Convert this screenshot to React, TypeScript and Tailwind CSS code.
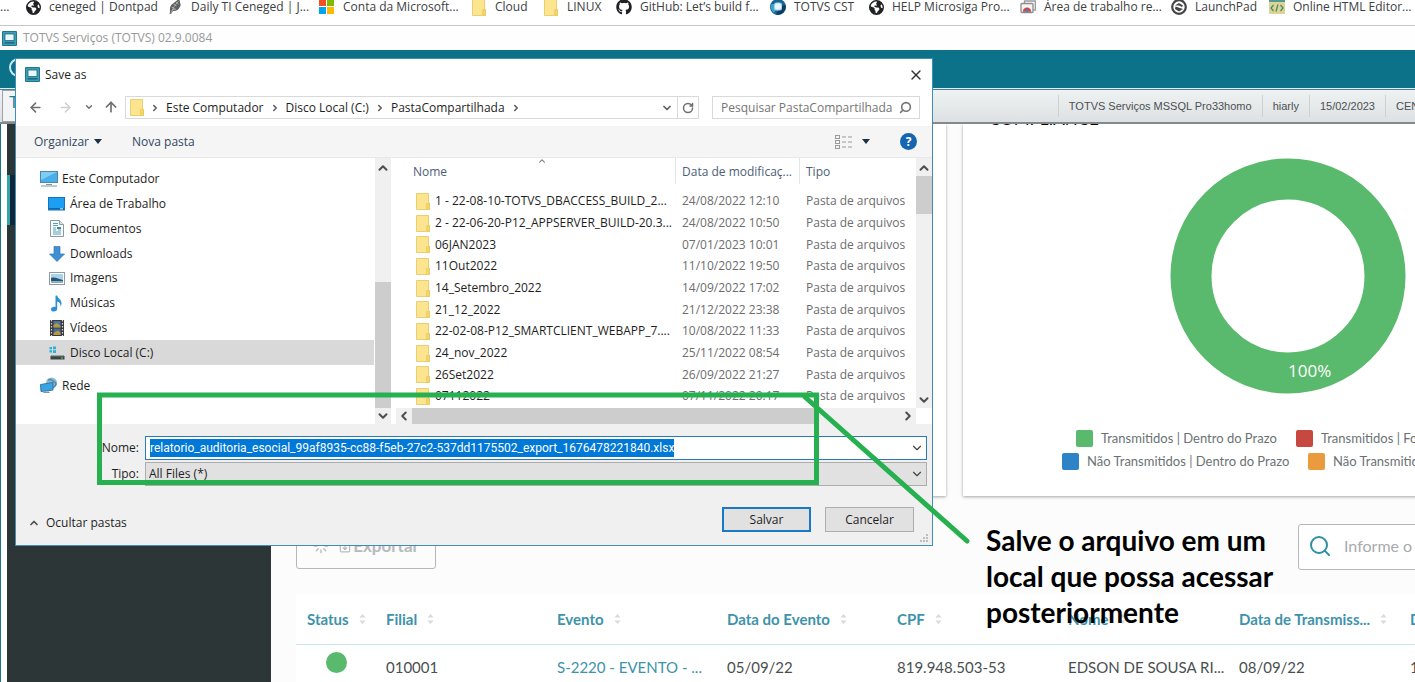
import React from "react";
import {
  ArrowLeft,
  ArrowRight,
  ArrowUp,
  ChevronDown,
  ChevronLeft,
  ChevronRight,
  ChevronUp,
  FileDown,
  Loader,
  RotateCw,
  Search,
  X,
} from "lucide-react";
import { FaGithub, FaEarthAmericas } from "react-icons/fa6";

/* ---------- icons ---------- */

function FolderIcon({ className = "" }: { className?: string }) {
  return (
    <svg viewBox="0 0 14 17" className={`h-[17px] w-[14px] shrink-0 ${className}`} aria-hidden="true">
      <path d="M0.5 0.5h12v10h1v6H0.5z" fill="#fde48f" stroke="#e9cf74" />
      <path d="M10.5 10.5h3v6h-3z" fill="#f6d568" stroke="#e6c75f" strokeWidth="0.6" />
    </svg>
  );
}

function TerminalIcon() {
  return (
    <svg viewBox="0 0 15 15" className="h-[15px] w-[15px] shrink-0" aria-hidden="true">
      <rect width="15" height="15" rx="1" fill="#1c7791" />
      <rect x="1" y="1" width="13" height="13" fill="#3f9cb3" />
      <rect x="3" y="3" width="9" height="6.5" fill="#eaf7fa" stroke="#1c6c84" strokeWidth="0.8" />
      <rect x="2.5" y="11" width="10" height="1.6" fill="#1b6a82" />
    </svg>
  );
}

function FeatherIcon() {
  return (
    <svg viewBox="0 0 16 16" className="h-4 w-4" aria-hidden="true">
      <path d="M2.500 14.500c.8-1.500.5-3 .5-5C3 5 8 4 11.500 0c1 .8 1.700 2.300 1.500 4 1 1 .8 3-.5 4.500C11.500 11 9 12.500 6 12l-2 3z" fill="#5f5f5f" />
      <path d="M4 14C6 9 8 6 11.500 2.500M4.500 8l3 1.500M6.500 5l3 2M9 3l2.500 2M5 11l4-1" stroke="#c9c9c9" strokeWidth="0.700" fill="none" />
    </svg>
  );
}

function MicrosoftIcon() {
  return (
    <svg viewBox="0 0 16 16" className="h-4 w-4" aria-hidden="true">
      <path d="M0 0h7v7H0z" fill="#f25022" />
      <path d="M8 0h7v7H8z" fill="#7fba00" />
      <path d="M0 8h7v7H0z" fill="#00a4ef" />
      <path d="M8 8h7v7H8z" fill="#ffb900" />
    </svg>
  );
}

function OrbIcon() {
  return (
    <svg viewBox="0 0 16 16" className="h-4 w-4" aria-hidden="true">
      <circle cx="8" cy="8" r="8" fill="#17648f" />
      <path d="M1.500 5A7.500 7.500 0 0 0 4 14l2-3-2-6z" fill="#3fa3cc" />
      <path d="M6 15.500A8 8 0 0 0 15.500 6L12 7l-4 5z" fill="#0d3b66" />
      <rect x="4" y="3.500" width="8" height="8" rx="2.500" fill="#a9d6ea" />
      <rect x="5" y="4.500" width="6" height="6" rx="2" fill="#e8f6fb" />
    </svg>
  );
}

function RemoteIcon() {
  return (
    <svg viewBox="0 0 16 16" className="h-4 w-4" aria-hidden="true">
      <path d="M4.500 4V2h10.800v9h-2" fill="#fff" stroke="#9a9a9a" strokeWidth="1.300" />
      <rect x="1" y="4.500" width="12" height="9" rx="1" fill="#f4f4f4" stroke="#8c8c8c" strokeWidth="1.300" />
      <path d="M2.800 12.800a4.200 4.200 0 0 1 8.400 0z" fill="#d9442f" />
      <circle cx="7" cy="11.600" r="1.600" fill="#3f7fe0" />
    </svg>
  );
}

function LaunchIcon() {
  return (
    <svg viewBox="0 0 16 16" className="h-4 w-4" aria-hidden="true">
      <circle cx="8" cy="8" r="6.800" fill="#fff" stroke="#444" strokeWidth="2.200" />
      <path d="M4 6.500 8 4l4 2.500L11 8 8 6.500zM4.500 7.500 12 10l-4 2.500-4-2.500z" fill="#444" />
    </svg>
  );
}

function CodeIcon() {
  return (
    <svg viewBox="0 0 16 16" className="h-4 w-4" aria-hidden="true">
      <rect width="16" height="15" fill="#dcd39a" />
      <rect width="16" height="3" fill="#559a8e" />
      <path d="M4.500 6 2 9l2.500 3M11.500 6 14 9l-2.500 3M9 5.500l-2 7" stroke="#4c8f56" strokeWidth="1.300" fill="none" />
    </svg>
  );
}

function ComputerIcon() {
  return (
    <svg viewBox="0 0 18 16" className="h-4 w-[18px] shrink-0" aria-hidden="true">
      <rect x="0.500" y="0.500" width="17" height="11" fill="#4aaee8" stroke="#4f87a8" />
      <path d="M1 1h16L1 9z" fill="#7fccf5" />
      <path d="M6 13h6v1H6zM1 14.500h16v1H1z" fill="#7f97a5" />
    </svg>
  );
}

function DesktopIcon() {
  return (
    <svg viewBox="0 0 17 14" className="h-3.5 w-[17px]" aria-hidden="true">
      <rect x="0.500" y="0.500" width="16" height="12.500" fill="#1c9ff2" stroke="#1474bb" />
      <path d="M1 11h15v1.500H1z" fill="#0d67ad" />
      <path d="M12 11.300h3v1h-3z" fill="#d3ecff" />
    </svg>
  );
}

function DocumentIcon() {
  return (
    <svg viewBox="0 0 14 17" className="h-[17px] w-3.5" aria-hidden="true">
      <path d="M0.500 0.500h9l4 4v12H0.500z" fill="#f8fafb" stroke="#8e999e" />
      <path d="M9.500 0.500v4h4" fill="#dfe5e8" stroke="#8e999e" />
      <path d="M3 3.500h5M3 5.500h5M3 8h3M3 10h3M3 12h8M3 14h8M8 10h3" stroke="#4fa3b8" strokeWidth="1" />
      <path d="M7 7h4v2H7z" fill="#3c8a9c" />
    </svg>
  );
}

function DownloadIcon() {
  return (
    <svg viewBox="0 0 16 16" className="h-4 w-4" aria-hidden="true">
      <path d="M5 0.500h6V8h4.500L8 15.500.500 8H5z" fill="#3f8fd2" stroke="#2f78b6" strokeWidth="0.700" />
    </svg>
  );
}

function PictureIcon() {
  return (
    <svg viewBox="0 0 16 13" className="h-[13px] w-4" aria-hidden="true">
      <rect x="0.500" y="0.500" width="15" height="12" fill="#fff" stroke="#8f9ba3" />
      <rect x="2" y="2" width="12" height="9" fill="#a8d3ec" />
      <path d="M2 6c4-1.500 7 1 12 2v1.500H2z" fill="#31536b" />
      <path d="M2 9h12v2H2z" fill="#7fb4cc" />
    </svg>
  );
}

function MusicIcon() {
  return (
    <svg viewBox="0 0 13 17" className="h-[17px] w-[13px]" aria-hidden="true">
      <path d="M5.500 0.500h1.700c.3 3 4.800 4 4.300 8.500-.2 1.300-.8 2-1.300 2.500.8-3-1-4.500-3-5v7.200c0 1.700-1.500 2.800-3.300 2.800S1 15.600 1 14.200s1.300-2.500 3-2.500c.6 0 1 .1 1.500.3z" fill="#2b8fd6" />
    </svg>
  );
}

function VideoIcon() {
  return (
    <svg viewBox="0 0 14 16" className="h-4 w-3.5" aria-hidden="true">
      <rect width="14" height="16" fill="#38383c" />
      <path d="M1.500 0v16M12.500 0v16" stroke="#d5d5d5" strokeWidth="1.200" strokeDasharray="1.500 1.500" />
      <rect x="3.500" y="1" width="7" height="6.500" fill="#4f74a8" />
      <rect x="3.500" y="8.500" width="7" height="6.500" fill="#3f6da5" />
      <path d="M3.500 5 7 3l3.500 3v1.500h-7zM3.500 13 8 10.500l2.500 2V15h-7z" fill="#b79a3a" />
    </svg>
  );
}

function DriveIcon() {
  return (
    <svg viewBox="0 0 16 14" className="h-3.5 w-4" aria-hidden="true">
      <path d="M0.500 1h2.500v2.300H.500zM4 .500h3v2.800H4zM.500 4.200h2.500v2.300H.500zM4 4.200h3V7H4z" fill="#26b3d6" />
      <path d="M3 9h11l1.500 1.500v3h-14v-3z" fill="#3d4444" />
      <path d="M3 9h11l1 1.300H2z" fill="#9aa3a3" />
      <path d="M12 11.500h2v1h-2z" fill="#5fe05f" />
    </svg>
  );
}

function NetworkIcon() {
  return (
    <svg viewBox="0 0 18 17" className="h-[17px] w-[18px] shrink-0" aria-hidden="true">
      <circle cx="11.500" cy="6" r="5.500" fill="#8cb9d0" />
      <path d="M8 3c2-1 4 0 5 1s3 1 3 3-2 3-4 4" stroke="#4f8aa8" strokeWidth="1.400" fill="none" />
      <path d="M0.500 7.500 13 5.500v7.500L1 14.500z" fill="#3aa5e6" stroke="#3676a0" />
      <path d="M3 16h7l-1-1.500H4z" fill="#7f97a5" />
    </svg>
  );
}

function ViewModeIcon() {
  return (
    <svg viewBox="0 0 18 14" className="h-3.5 w-[18px]" aria-hidden="true">
      {[0, 5, 10].map((y) => (
        <g key={y} stroke="#9a9a9a" fill="none">
          <rect x="0.500" y={y + 0.500} width="4" height="3" />
          <path d={`M7 ${y + 2}h4M13 ${y + 2}h4`} strokeWidth="1.200" />
        </g>
      ))}
    </svg>
  );
}

function SortArrows() {
  return (
    <svg viewBox="0 0 7 10" className="ml-2.5 inline-block h-2.5 w-[7px] align-[1px]" aria-hidden="true">
      <path d="M3.500 0 6.500 3.500h-6zM3.500 10 .500 6.500h6z" fill="#d6dadb" />
    </svg>
  );
}

function Caret() {
  return (
    <svg viewBox="0 0 8 5" className="h-[5px] w-2" aria-hidden="true">
      <path d="M0 0h8L4 5z" fill="#1d3145" />
    </svg>
  );
}

/* ---------- data ---------- */

const bookmarks: { label: string; icon: React.ReactNode }[] = [
  { label: "ceneged | Dontpad", icon: <FaEarthAmericas className="h-[15px] w-[15px] text-[#202124]" /> },
  { label: "Daily TI Ceneged | J...", icon: <FeatherIcon /> },
  { label: "Conta da Microsoft...", icon: <MicrosoftIcon /> },
  { label: "Cloud", icon: <FolderIcon /> },
  { label: "LINUX", icon: <FolderIcon /> },
  { label: "GitHub: Let’s build f...", icon: <FaGithub className="h-4 w-4 text-[#202124]" /> },
  { label: "TOTVS CST", icon: <OrbIcon /> },
  { label: "HELP Microsiga Pro...", icon: <FaEarthAmericas className="h-[15px] w-[15px] text-[#202124]" /> },
  { label: "Área de trabalho re...", icon: <RemoteIcon /> },
  { label: "LaunchPad", icon: <LaunchIcon /> },
  { label: "Online HTML Editor...", icon: <CodeIcon /> },
];

const places = [
  { label: "Área de Trabalho", icon: <DesktopIcon /> },
  { label: "Documentos", icon: <DocumentIcon /> },
  { label: "Downloads", icon: <DownloadIcon /> },
  { label: "Imagens", icon: <PictureIcon /> },
  { label: "Músicas", icon: <MusicIcon /> },
  { label: "Vídeos", icon: <VideoIcon /> },
  { label: "Disco Local (C:)", icon: <DriveIcon />, selected: true },
];

const folders = [
  ["1 - 22-08-10-TOTVS_DBACCESS_BUILD_2...", "24/08/2022 12:10"],
  ["2 - 22-06-20-P12_APPSERVER_BUILD-20.3...", "24/08/2022 10:50"],
  ["06JAN2023", "07/01/2023 10:01"],
  ["11Out2022", "11/10/2022 19:50"],
  ["14_Setembro_2022", "14/09/2022 17:02"],
  ["21_12_2022", "21/12/2022 23:38"],
  ["22-02-08-P12_SMARTCLIENT_WEBAPP_7....", "10/08/2022 11:33"],
  ["24_nov_2022", "25/11/2022 08:54"],
  ["26Set2022", "26/09/2022 21:27"],
  ["07112022", "07/11/2022 20:17"],
];

const columns = ["Status", "Filial", "Evento", "Data do Evento", "CPF", "Nome", "Data de Transmiss...", "Data"];

/* ---------- browser and application chrome ---------- */

function BookmarksBar() {
  return (
    <nav
      aria-label="Favoritos"
      className="grid h-[26px] shrink-0 grid-cols-[25px_142px_152px_152px_72px_73px_154px_98px_152px_151px_98px_1fr] border-b border-[#c4c7c9] bg-white font-['Open_Sans',sans-serif] text-xs leading-[14px] text-[#3c4043]"
    >
      <span>...</span>
      {bookmarks.map((b) => (
        <a key={b.label} href="#" className="flex h-3.5 items-center gap-2 whitespace-nowrap">
          <span className="flex w-4 shrink-0 justify-center">{b.icon}</span>
          {b.label}
        </a>
      ))}
    </nav>
  );
}

function StatusBar() {
  return (
    <div className="flex h-[35px] shrink-0 items-center border-y border-b-2 border-t-[#4e7f8a] border-b-[#84898b] bg-linear-to-b from-[#eef2f3] to-[#dde1e3] font-['Liberation_Sans',sans-serif] text-[11px] text-[#4c5052]">
      <div className="ml-0.5 h-full w-4 border border-[#9ba3a6] bg-[#f2f4f6] pl-1.5 text-base text-[#1f7d95]">T</div>
      <div className="ml-auto flex h-[22px] items-center [&>span]:border-l [&>span]:border-[#ccd1d3] [&>span]:px-[10px] [&>span]:leading-[22px]">
        <span>TOTVS Serviços MSSQL Pro33homo</span>
        <span>hiarly</span>
        <span>15/02/2023</span>
        <span className="w-[30px] overflow-hidden">CENEGED</span>
      </div>
    </div>
  );
}

function Legend({ color, label }: { color: string; label: string }) {
  return (
    <li className="flex items-center gap-2 whitespace-nowrap">
      <span className={`h-[17px] w-[17px] rounded-[2px] ${color}`} />
      {label}
    </li>
  );
}

function Dashboard() {
  return (
    <main className="min-w-0 flex-1 overflow-hidden bg-[#fcfcfc] pl-[25px] font-['Lato','Open_Sans',sans-serif]">
      <div className="min-w-[1317px]">
        <div className="grid grid-cols-2 gap-[17px]">
          <section className="h-[372px] bg-white shadow-[0_1px_3px_rgba(0,0,0,0.35)]" />
          <section className="h-[372px] overflow-hidden bg-white shadow-[0_1px_3px_rgba(0,0,0,0.35)]">
            <h2 className="-mt-[15px] pl-[26px] text-[17px] leading-5 text-black">COMPLIANCE</h2>
            <svg viewBox="0 0 236 236" className="mx-auto mt-[29px] block h-[236px] w-[236px]" role="img" aria-label="100%">
              <circle cx="118" cy="118" r="97" fill="none" stroke="#59b96c" strokeWidth="41" />
              <text x="118" y="219" fill="#fff" className="font-['Open_Sans',sans-serif] text-[17px]">
                100%
              </text>
            </svg>
            <ul className="mt-[33px] grid grid-cols-[220px_1fr] pl-[113px] text-[13px] leading-[23px] text-[#6b7274]">
              <Legend color="bg-[#59b96c]" label="Transmitidos | Dentro do Prazo" />
              <Legend color="bg-[#c64840]" label="Transmitidos | Fora do Prazo" />
            </ul>
            <ul className="grid grid-cols-[246px_1fr] pl-[99px] text-[13px] leading-[23px] text-[#6b7274]">
              <Legend color="bg-[#2d83c5]" label="Não Transmitidos | Dentro do Prazo" />
              <Legend color="bg-[#ea9b3e]" label="Não Transmitidos | Fora do Prazo" />
            </ul>
          </section>
        </div>

        <div className="mt-7 flex items-start justify-between">
          <button type="button" className="flex h-[45px] w-[140px] items-center justify-center gap-px rounded-[3px] border border-[#b4b8b9] pb-0.5 text-[17px] font-bold text-[#b5babb]">
            <Loader className="mr-2 h-4 w-4" />
            <FileDown className="h-4 w-3.5" />
            Exportar
          </button>
          <label className="flex h-[46px] w-[315px] items-center gap-3 rounded-[3px] border border-[#b4b8b9] bg-white pb-0.5 pl-[9px]">
            <Search className="h-6 w-6 shrink-0 text-[#2f8fa5]" strokeWidth={2} />
            <input type="search" aria-label="Pesquisar" placeholder="Informe o nome" className="w-full text-base outline-none placeholder:text-[#a7abad]" />
          </label>
        </div>

        <table className="mt-6 w-full table-fixed bg-white text-left text-[15px] text-[#4a4f51]">
          <colgroup>
            <col className="w-[79px]" />
            <col className="w-[171px]" />
            <col className="w-[170px]" />
            <col className="w-[170px]" />
            <col className="w-[171px]" />
            <col className="w-[171px]" />
            <col className="w-[171px]" />
            <col />
          </colgroup>
          <thead>
            <tr className="h-[50px] border-b border-[#c9e6ec] text-[#3d93aa]">
              {columns.map((c) => (
                <th key={c} className="whitespace-nowrap pl-[11px] font-bold">
                  {c}
                  <SortArrows />
                </th>
              ))}
            </tr>
          </thead>
          <tbody>
            <tr className="h-[45px]">
              <td className="pl-[30px]">
                <span role="img" aria-label="Transmitido" className="mb-2 block h-[21px] w-[21px] rounded-full bg-[#59b96c]" />
              </td>
              <td className="pl-[11px]">010001</td>
              <td className="pl-[11px]">
                <a href="#" className="text-[#3d93aa]">
                  S-2220 - EVENTO - ...
                </a>
              </td>
              <td className="pl-[11px]">05/09/22</td>
              <td className="pl-[11px]">819.948.503-53</td>
              <td className="pl-[11px]">EDSON DE SOUSA RI...</td>
              <td className="pl-[11px]">08/09/22</td>
              <td className="pl-[11px]">15/09/22</td>
            </tr>
          </tbody>
        </table>
      </div>
    </main>
  );
}

/* ---------- save dialog ---------- */

function ScrollArrow({ dir }: { dir: "up" | "down" | "left" | "right" }) {
  const Icon = { up: ChevronUp, down: ChevronDown, left: ChevronLeft, right: ChevronRight }[dir];
  return (
    <button type="button" aria-label={dir} className="flex h-4 w-4 shrink-0 items-center justify-center text-[#505050]">
      <Icon className="h-3.5 w-3.5" strokeWidth={3.5} />
    </button>
  );
}

function AddressRow() {
  const crumbs = ["Este Computador", "Disco Local (C:)", "PastaCompartilhada"];
  return (
    <div className="flex h-9 items-start pl-3 pr-3 pt-1.5">
      <div className="flex h-[22px] w-[97px] items-center text-[#6f6f6f]">
        <button type="button" aria-label="Voltar" className="w-[30px]">
          <ArrowLeft className="h-[15px] w-[15px]" strokeWidth={2.5} />
        </button>
        <button type="button" aria-label="Avançar" className="w-6 text-[#d0d0d0]">
          <ArrowRight className="h-[15px] w-[15px]" strokeWidth={2.5} />
        </button>
        <button type="button" aria-label="Recentes" className="w-[21px] pl-0.5">
          <ChevronDown className="h-2.5 w-2.5" strokeWidth={3.5} />
        </button>
        <button type="button" aria-label="Acima">
          <ArrowUp className="h-4 w-4" strokeWidth={2.5} />
        </button>
      </div>
      <div className="flex h-[23px] flex-1 items-center border border-[#d9d9d9] bg-white pl-1">
        <FolderIcon />
        <ChevronRight className="mx-1.5 h-2.5 w-2.5 text-[#555]" strokeWidth={3.5} />
        {crumbs.map((c) => (
          <React.Fragment key={c}>
            <a href="#" className="whitespace-nowrap">
              {c}
            </a>
            <ChevronRight className="mx-1.5 h-2.5 w-2.5 text-[#555]" strokeWidth={3.5} />
          </React.Fragment>
        ))}
        <ChevronDown className="ml-auto mr-1 h-3 w-3 text-[#606060]" strokeWidth={3.5} />
        <button type="button" aria-label="Atualizar" className="flex h-full w-[21px] items-center justify-center border-l border-[#d9d9d9] text-[#707070]">
          <RotateCw className="h-3 w-3" strokeWidth={3} />
        </button>
      </div>
      <label className="ml-[13px] flex h-[23px] w-[208px] items-center border border-[#d9d9d9] bg-white pl-2 pr-[7px]">
        <input aria-label="Pesquisar" placeholder="Pesquisar PastaCompartilhada" className="min-w-0 flex-1 outline-none placeholder:text-[#757575]" />
        <Search className="h-[13px] w-[13px] shrink-0 -scale-x-100 text-[#757575]" strokeWidth={3} />
      </label>
    </div>
  );
}

function PlacesTree() {
  return (
    <div className="flex w-[375px] shrink-0">
      <div className="flex-1 pr-px pt-[9px]">
        <ul className="flex h-[198px] flex-col [&>li]:flex [&>li]:flex-1 [&>li]:items-center">
          <li className="gap-1 pl-6">
            <ComputerIcon />
            Este Computador
          </li>
          {places.map((p) => (
            <li key={p.label} className={p.selected ? "gap-[5px] bg-[#d9d9d9] pl-8" : "gap-[5px] pl-8"}>
              <span className="flex w-[17px] justify-center">{p.icon}</span>
              {p.label}
            </li>
          ))}
        </ul>
        <p className="mt-2 flex h-[25px] items-center gap-1 pl-6">
          <NetworkIcon />
          Rede
        </p>
      </div>
      <div className="flex w-4 flex-col bg-[#f0f0f0] pt-0.5">
        <ScrollArrow dir="up" />
        <div className="mt-auto h-[126px] bg-[#cdcdcd]" />
        <ScrollArrow dir="down" />
      </div>
    </div>
  );
}

function FileList() {
  return (
    <div className="grid min-w-0 flex-1 grid-cols-[1fr_16px] grid-rows-[250px_16px] pl-[5px]">
      <div className="relative overflow-hidden">
        <ChevronUp className="absolute left-[141px] top-[-2px] h-2.5 w-2.5 text-[#666]" strokeWidth={2.5} />
        <table className="w-full table-fixed text-left">
          <colgroup>
            <col className="w-[280px]" />
            <col className="w-[124px]" />
            <col />
          </colgroup>
          <thead>
            <tr className="h-8 align-top text-[#4c607a] [&>th]:p-0 [&>th]:font-normal">
              <th>
                <div className="h-[26px] border-r border-[#e5e5e5] pl-[17px] leading-7">Nome</div>
              </th>
              <th>
                <div className="h-[26px] whitespace-nowrap border-r border-[#e5e5e5] pl-[6px] leading-7">Data de modificaç...</div>
              </th>
              <th>
                <div className="h-[26px] pl-[6px] leading-7">Tipo</div>
              </th>
            </tr>
          </thead>
          <tbody className="[&_td]:whitespace-nowrap [&_td]:p-0">
            {folders.map(([name, date]) => (
              <tr key={name} className="h-[22px] leading-5 nth-[3n]:h-[21px]">
                <td>
                  <div className="flex items-center gap-[5px] pl-5">
                    <FolderIcon />
                    {name}
                  </div>
                </td>
                <td className="text-[#6d6d6d]">
                  <span className="pl-[6px]">{date}</span>
                </td>
                <td className="text-[#6d6d6d]">
                  <span className="pl-[6px]">Pasta de arquivos</span>
                </td>
              </tr>
            ))}
          </tbody>
        </table>
      </div>
      <div className="flex flex-col bg-[#f0f0f0] pt-0.5">
        <ScrollArrow dir="up" />
        <div className="h-[38px] bg-[#cdcdcd]" />
        <div className="mt-auto">
          <ScrollArrow dir="down" />
        </div>
      </div>
      <div className="flex justify-between bg-[#f0f0f0]">
        <ScrollArrow dir="left" />
        <div className="mr-auto w-[402px] bg-[#cdcdcd]" />
        <ScrollArrow dir="right" />
      </div>
    </div>
  );
}

function SaveDialog() {
  return (
    <div
      role="dialog"
      aria-label="Save as"
      className="absolute left-[15px] top-[58px] w-[918px] border border-[#3f8fb4] bg-white font-['Open_Sans','Noto_Sans',sans-serif] text-xs text-[#1e1e1e]"
    >
      <header className="flex h-[31px] items-center gap-[5px] pl-[9px] pr-2">
        <TerminalIcon />
        <h1>Save as</h1>
        <button type="button" aria-label="Fechar" className="ml-auto">
          <X className="h-4 w-4 text-[#333]" strokeWidth={2} />
        </button>
      </header>
      <AddressRow />
      <div className="flex h-8 items-center border-b border-[#e8e8e8] bg-[#f5f5f6] pl-[18px] pr-[15px] text-[#33475f]">
        <button type="button" className="flex w-[98px] items-center gap-[5px]">
          Organizar <Caret />
        </button>
        <button type="button">Nova pasta</button>
        <button type="button" aria-label="Modo de exibição" className="ml-auto flex items-center gap-[9px]">
          <ViewModeIcon />
          <Caret />
        </button>
        <button type="button" aria-label="Ajuda" className="ml-[30px] h-[17px] w-[17px] rounded-full bg-[#1565b0] text-xs font-bold leading-[17px] text-white">
          ?
        </button>
      </div>
      <div className="flex h-[266px]">
        <PlacesTree />
        <FileList />
      </div>
      <form className="bg-[#f0f0f0] pb-[13px] pt-3" onSubmit={(e) => e.preventDefault()}>
        <div className="grid grid-cols-[123px_1fr] items-center gap-x-[6px] gap-y-0.5 pr-[5px]">
          <label htmlFor="file-name" className="text-right">
            Nome:
          </label>
          <div className="flex h-6 items-center border border-[#2a7ab8] bg-white pl-1 pr-0.5">
            <input
              id="file-name"
              defaultValue="relatorio_auditoria_esocial_99af8935-cc88-f5eb-27c2-537dd1175502_export_1676478221840.xlsx"
              className="field-sizing-content h-[18px] bg-[#0078d7] font-['Roboto',sans-serif] text-white outline-none"
            />
            <ChevronDown className="ml-auto h-3.5 w-3.5 text-[#444]" strokeWidth={2} />
          </div>
          <label htmlFor="file-type" className="text-right">
            Tipo:
          </label>
          <div className="relative">
            <select id="file-type" className="block h-6 w-full appearance-none border border-[#adadad] bg-[#e1e1e1] pl-[3px] outline-none">
              <option>All Files (*)</option>
            </select>
            <ChevronDown className="pointer-events-none absolute right-[3px] top-[5px] h-3.5 w-3.5 text-[#444]" strokeWidth={2} />
          </div>
        </div>
        <div className="mt-[21px] flex items-center pl-3 pr-[18px]">
          <button type="button" className="flex items-center gap-1.5 pt-1.5">
            <ChevronUp className="h-3 w-3 text-[#505050]" strokeWidth={3.5} />
            Ocultar pastas
          </button>
          <button type="submit" className="ml-auto h-[25px] w-[89px] border-2 border-[#1a78c8] bg-[#e1e1e1]">
            Salvar
          </button>
          <button type="button" className="ml-3.5 h-[25px] w-[89px] border border-[#adadad] bg-[#e1e1e1]">
            Cancelar
          </button>
        </div>
      </form>
      <svg viewBox="0 0 9 9" className="absolute bottom-0.5 right-[3px] h-[9px] w-[9px]" aria-hidden="true">
        <path d="M6 0h2v2H6zM3 3h2v2H3zM6 3h2v2H6zM0 6h2v2H0zM3 6h2v2H3zM6 6h2v2H6z" fill="#bdbdbd" />
      </svg>
    </div>
  );
}

/* ---------- page ---------- */

export default function App() {
  return (
    <div className="relative flex h-screen flex-col overflow-hidden bg-white">
      <BookmarksBar />
      <div className="flex h-6 shrink-0 items-center gap-[6px] bg-[#fdfefd] pl-0.5 font-['Open_Sans',sans-serif] text-xs text-[#9a9a9a]">
        <TerminalIcon />
        TOTVS Serviços (TOTVS) 02.9.0084
      </div>
      <div className="h-[39px] shrink-0 border-b border-[#d9f1f4] bg-[#0b728a] pl-[9px] pt-2">
        <div className="h-[19px] w-[19px] rounded-full border-2 border-[#cfe9ee]" />
      </div>
      <StatusBar />
      <div className="flex min-h-0 flex-1 border-l border-[#1f7188] pl-1.5">
        <aside className="w-[264px] shrink-0 bg-[#2d3637] pt-[51px]">
          <div className="h-[50px] border-l-[3px] border-[#35a3ac] bg-[#10273a]" />
        </aside>
        <Dashboard />
      </div>

      <SaveDialog />

      <svg viewBox="0 0 880 160" className="pointer-events-none absolute left-[96px] top-[391px] h-[160px] w-[880px]" aria-hidden="true">
        <rect x="3.500" y="4" width="717" height="87.500" fill="none" stroke="#27b050" strokeWidth="5" />
        <path d="M709 6 871 150" stroke="#27b050" strokeWidth="5" strokeLinecap="round" />
      </svg>
      <p className="absolute left-[986px] top-[522px] w-[300px] font-['Lato',sans-serif] text-[28px] font-bold leading-9 text-black">
        Salve o arquivo em um local que possa acessar posteriormente
      </p>
    </div>
  );
}
